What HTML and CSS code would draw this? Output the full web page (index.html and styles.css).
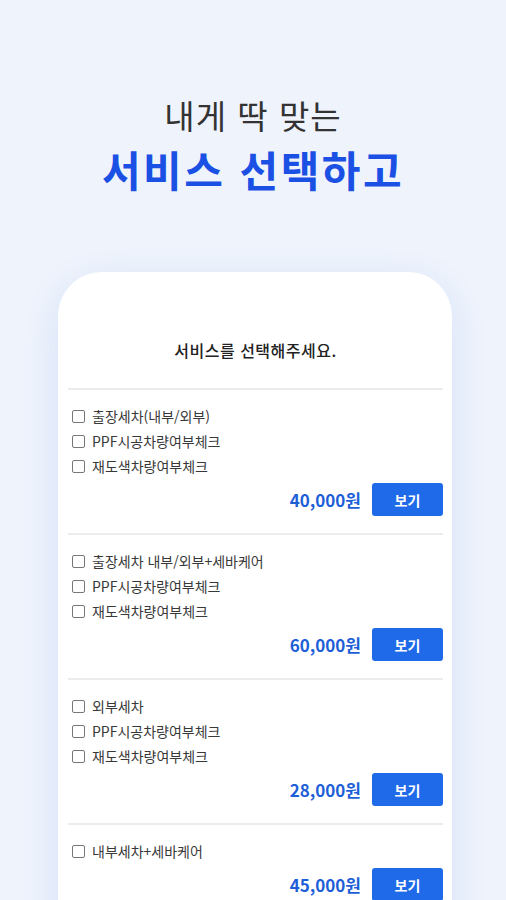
FILE: index.html
```html
<!DOCTYPE html>
<html lang="ko">
<head>
    <meta charset="UTF-8">
    <meta name="viewport" content="width=device-width, initial-scale=1.0">
    <title>서비스 선택</title>
    <link rel="stylesheet" href="styles.css">
</head>
<body>
<div class="page">
    <!-- Headline -->
    <div class="headline">
        <p class="headline-sub">내게 딱 맞는</p>
        <h1 class="headline-main">서비스 선택하고</h1>
    </div>

    <!-- Phone card -->
    <div class="card">
        <h2 class="card-title">서비스를 선택해주세요.</h2>

        <div class="service">
            <ul class="options">
                <li><span class="check"></span>출장세차(내부/외부)</li>
                <li><span class="check"></span>PPF시공차량여부체크</li>
                <li><span class="check"></span>재도색차량여부체크</li>
            </ul>
            <div class="service-foot">
                <span class="price">40,000원</span>
                <button class="view-btn">보기</button>
            </div>
        </div>

        <div class="service">
            <ul class="options">
                <li><span class="check"></span>출장세차 내부/외부+세바케어</li>
                <li><span class="check"></span>PPF시공차량여부체크</li>
                <li><span class="check"></span>재도색차량여부체크</li>
            </ul>
            <div class="service-foot">
                <span class="price">60,000원</span>
                <button class="view-btn">보기</button>
            </div>
        </div>

        <div class="service">
            <ul class="options">
                <li><span class="check"></span>외부세차</li>
                <li><span class="check"></span>PPF시공차량여부체크</li>
                <li><span class="check"></span>재도색차량여부체크</li>
            </ul>
            <div class="service-foot">
                <span class="price">28,000원</span>
                <button class="view-btn">보기</button>
            </div>
        </div>

        <div class="service">
            <ul class="options">
                <li><span class="check"></span>내부세차+세바케어</li>
            </ul>
            <div class="service-foot">
                <span class="price">45,000원</span>
                <button class="view-btn">보기</button>
            </div>
        </div>
    </div>
</div>
</body>
</html>
```

FILE: styles.css
```css
html, body {
    margin: 0;
    padding: 0;
    height: 900px;
    overflow: hidden;
}
body {
    font-family: "Noto Sans CJK KR", "Noto Sans", sans-serif;
    background-color: #eff4fc;
    color: #222;
}
.page {
    padding-top: 95px;
}
.headline {
    text-align: center;
}
.headline-sub {
    margin: 0;
    font-size: 33px;
    line-height: 40px;
    font-weight: 400;
    color: #333;
    letter-spacing: 1px;
}
.headline-main {
    margin: 8px 0 0;
    font-size: 42px;
    line-height: 52px;
    font-weight: 700;
    color: #1b50e4;
    letter-spacing: 2.5px;
}
.card {
    width: 394px;
    margin: 77px 0 0 58px;
    padding: 66px 9px 40px 10px;
    box-sizing: border-box;
    background: #fff;
    border-radius: 44px 44px 0 0;
    box-shadow: 0 10px 40px rgba(80, 130, 230, 0.16);
}
.card-title {
    margin: 0 0 26px;
    text-align: center;
    font-size: 16px;
    line-height: 24px;
    font-weight: 500;
    color: #222;
    letter-spacing: 0.5px;
}
.service {
    border-top: 2px solid #ececef;
    padding: 14px 0 17px;
}
.options {
    list-style: none;
    margin: 0;
    padding: 0 0 0 4px;
}
.options li {
    display: flex;
    align-items: center;
    gap: 7px;
    font-size: 14px;
    line-height: 25px;
    color: #383838;
}
.check {
    width: 11px;
    height: 11px;
    border: 1px solid #777;
    border-radius: 2px;
    background: #fff;
}
.service-foot {
    display: flex;
    justify-content: flex-end;
    align-items: center;
    gap: 11px;
    margin-top: 4px;
}
.price {
    font-size: 17px;
    font-weight: 700;
    color: #1e5fd8;
}
.view-btn {
    width: 71px;
    height: 33px;
    border: none;
    border-radius: 3px;
    background-color: #1f6ae8;
    color: #fff;
    font-family: inherit;
    font-size: 14px;
    font-weight: 700;
    cursor: pointer;
}
```
